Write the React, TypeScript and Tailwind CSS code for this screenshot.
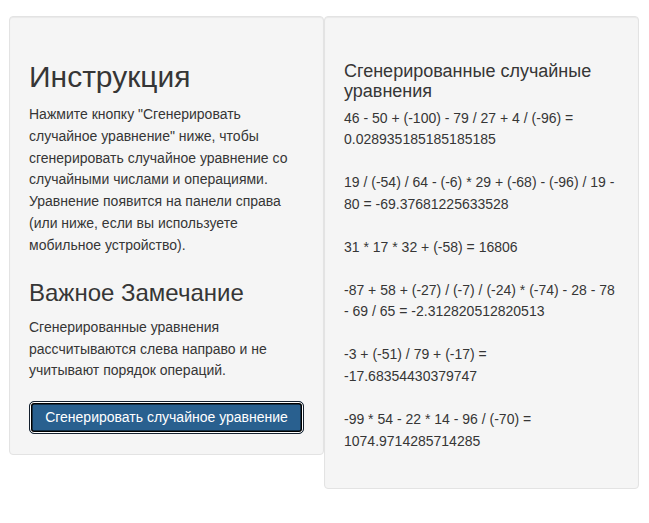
const EQUATIONS = [
  '46 - 50 + (-100) - 79 / 27 + 4 / (-96) = 0.028935185185185185',
  '19 / (-54) / 64 - (-6) * 29 + (-68) - (-96) / 19 - 80 = -69.37681225633528',
  '31 * 17 * 32 + (-58) = 16806',
  '-87 + 58 + (-27) / (-7) / (-24) * (-74) - 28 - 78 - 69 / 65 = -2.312820512820513',
  '-3 + (-51) / 79 + (-17) = -17.68354430379747',
  '-99 * 54 - 22 * 14 - 96 / (-70) = 1074.9714285714285',
]

// well look shared by both panels
const WELL =
  'w-[315px] shrink-0 rounded-[4px] border border-[#e3e3e3] bg-[#f5f5f5] shadow-[inset_0_1px_1px_rgba(0,0,0,0.05)] px-[19px]'

export default function App() {
  return (
    <div className="min-h-screen bg-white font-['Liberation_Sans',Arial,sans-serif] text-[#363636]">
      <div className="flex items-start pl-[9px] pt-[16px]">

        {/* Instructions */}
        <div className={`${WELL} pt-[43px] pb-[20px]`}>
          <h2 className="text-[30px] leading-[33px] font-normal mb-[11px]">Инструкция</h2>
          <p className="text-[14px] leading-[21.8px]">
            Нажмите кнопку "Сгенерировать случайное уравнение" ниже, чтобы сгенерировать случайное
            уравнение со случайными числами и операциями. Уравнение появится на панели справа (или
            ниже, если вы используете мобильное устройство).
          </p>

          <h3 className="text-[24px] leading-[26.4px] font-normal mt-[23px] mb-[11px]">Важное Замечание</h3>
          <p className="text-[14px] leading-[21.7px]">
            Сгенерированные уравнения рассчитываются слева направо и не учитывают порядок операций.
          </p>

          <button
            type="button"
            className="mt-[19px] w-full h-[33px] rounded-[5px] border border-[#14202e] bg-[#29608f] text-white text-[14px] shadow-[inset_0_0_0_1px_#ffffff,inset_0_0_0_2.5px_#000000]"
          >
            Сгенерировать случайное уравнение
          </button>
        </div>

        {/* Generated equations */}
        <div className={`${WELL} pt-[45px] pb-[15px]`}>
          <h4 className="text-[18px] leading-[19.8px] font-normal mb-[6px]">Сгенерированные случайные уравнения</h4>
          {EQUATIONS.map((eq) => (
            <p key={eq} className="text-[14px] leading-[21.8px] mb-[21px]">{eq}</p>
          ))}
        </div>

      </div>
    </div>
  )
}
